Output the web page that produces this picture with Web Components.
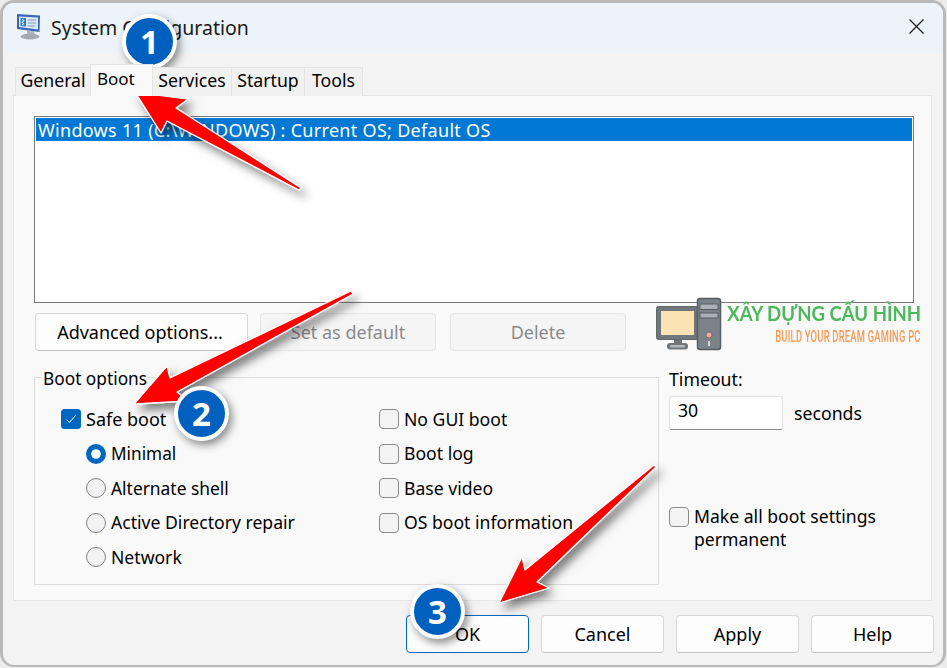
<!DOCTYPE html>
<html><head><meta charset="utf-8">
<style>
html,body{margin:0;padding:0;width:947px;height:668px;overflow:hidden;background:#ececec}
body{font-family:"Noto Sans","Open Sans",sans-serif;font-size:18px;color:#000}
</style></head><body>
<sys-window>
  <title-bar slot="title">System Configuration</title-bar>
  <tab-strip slot="tabs">
    <tab-item w="76">General</tab-item><tab-item w="63" active>Boot</tab-item><tab-item w="80">Services</tab-item><tab-item w="74">Startup</tab-item><tab-item w="59">Tools</tab-item>
  </tab-strip>
  <boot-panel slot="panel"></boot-panel>
  <win-button slot="foot" primary>OK</win-button>
  <win-button slot="foot">Cancel</win-button>
  <win-button slot="foot">Apply</win-button>
  <win-button slot="foot">Help</win-button>
</sys-window>
<brand-logo></brand-logo>
<arrow-layer></arrow-layer>
<step-badge n="1" style="left:122px;top:14px"></step-badge>
<step-badge n="2" style="left:174px;top:386px"></step-badge>
<step-badge n="3" style="left:410px;top:584px"></step-badge>
<script>
function def(name,html,init){
  customElements.define(name,class extends HTMLElement{
    constructor(){super();this.attachShadow({mode:'open'}).innerHTML=typeof html==='function'?html(this):html;}
    connectedCallback(){init&&init(this)}
  });
}
def('sys-window',`<style>
:host{display:flex;flex-direction:column;box-sizing:border-box;width:946px;height:667px;background:#f3f3f3;border:solid #b9b9b9;border-width:3px 3px 2px 3px;border-radius:14px;overflow:hidden;position:relative}
.foot{display:flex;justify-content:flex-end;gap:12px;padding:14px 9px 0 0}
.body{padding:0 10px;flex:0 0 auto}
</style>
<slot name="title"></slot>
<div class="body"><slot name="tabs"></slot><slot name="panel"></slot></div>
<div class="foot"><slot name="foot"></slot></div>`);
def('title-bar',`<style>
:host{display:flex;align-items:center;box-sizing:border-box;height:50px;background:#edf4f9;padding:0 0 2px 13px;font-size:19.5px;color:#1a1a1a;flex:none;position:relative}
svg.app{width:26px;height:26px;margin-right:9px;flex:none}
svg.x{position:absolute;right:19px;top:16px;width:15px;height:15px}
</style>
<svg class="app" viewBox="0 0 26 26"><path d="M1 0L24 1.5L23.5 18L1 15Z" fill="#3a66b8"/><path d="M3 2.5L22 3.5V15.5L3 13Z" fill="#dce8f6"/><path d="M4.5 4h5.5v8.5L4.5 12z" fill="#2b7fd0"/><path d="M6 5.5l2 1-2 2 2 1-2 1.5" fill="none" stroke="#fff" stroke-width="1"/><path d="M12 6h8M12 9h8M12 12h7" stroke="#7f97c0" stroke-width="1"/><path d="M11 17h7l1 4h-8z" fill="#aeb6be"/><ellipse cx="14" cy="22.5" rx="9.5" ry="3" fill="#a3abb3"/></svg>
<slot></slot>
<svg class="x" viewBox="0 0 15 15"><path d="M.5.5l14 14M14.5.5l-14 14" stroke="#1f1f1f" stroke-width="1.3" fill="none"/></svg>`);
def('tab-strip',`<style>:host{display:flex;align-items:flex-end;height:43px;padding-left:3px;position:relative;z-index:1;margin-bottom:-1px}</style><slot></slot>`);
def('tab-item',h=>`<style>
:host{display:block;box-sizing:border-box;width:${h.getAttribute('w')}px;height:29px;text-align:center;line-height:25px;font-size:17.7px;background:#f1f1f1;border:1px solid #e4e4e4;border-bottom:none;margin-left:-1px;color:#000}
:host([active]){height:32px;background:#f9f9f9;text-align:left;padding-left:6px;font-size:17px;line-height:27px;border-bottom:1px solid #f9f9f9;position:relative;z-index:1}
</style><slot></slot>`);
def('boot-panel',`<style>
:host{display:block;box-sizing:border-box;height:506px;background:#f9f9f9;border:1px solid #e4e4e4;padding:20px 18px 0 20px;width:919px}
.list{box-sizing:border-box;height:187px;width:880px;background:#fff;border:1px solid #7a7a7a;padding:1px}
.sel{background:#0078d4;color:#fff;height:23px;line-height:25px;padding-left:2px;white-space:nowrap;font-size:18px;letter-spacing:.3px}
.btns{display:flex;gap:12px;margin:10px 0 0 1px}
.lower{display:flex;margin-top:26px}
.group{box-sizing:border-box;width:625px;height:208px;border:1px solid #dcdcdc;position:relative;display:grid;grid-template-columns:318px 1fr;padding:24px 0 0 26px}
.legend{position:absolute;left:7px;top:-10px;background:#f9f9f9;padding:0 1px;font-size:17.3px;line-height:22px}
.col{display:flex;flex-direction:column;gap:0}
.sub{display:flex;flex-direction:column;padding-left:25px}
.right{margin-left:10px;display:flex;flex-direction:column;width:230px;position:relative;top:-9px;font-size:17.7px}
.tl{line-height:22px;height:28px}
.t{display:flex;align-items:center;gap:11px}
.inp{box-sizing:border-box;width:114px;height:34px;background:#fff;border:1px solid #e5e5e5;border-bottom-color:#8a8a8a;border-radius:3px;padding-left:8px;line-height:26px}
.perm{margin-top:75px}
</style>
<div class="list"><div class="sel">Windows 11 (C:\\WINDOWS) : Current OS; Default OS</div></div>
<div class="btns"><win-button w="213" style="padding-right:3px">Advanced options...</win-button><win-button w="176" disabled>Set as default</win-button><win-button w="176" style="margin-left:2px" disabled>Delete</win-button></div>
<div class="lower">
 <div class="group"><div class="legend">Boot options</div>
  <div class="col"><opt-row type="check" checked style="font-size:18px">Safe boot</opt-row>
   <div class="sub"><opt-row type="radio" checked style="font-size:17.2px">Minimal</opt-row><opt-row type="radio" style="font-size:17.4px">Alternate shell</opt-row><opt-row type="radio" style="margin-top:-.5px">Active Directory repair</opt-row><opt-row type="radio">Network</opt-row></div></div>
  <div class="col"><opt-row type="check">No GUI boot</opt-row><opt-row type="check">Boot log</opt-row><opt-row type="check">Base video</opt-row><opt-row type="check" style="margin-top:-.5px">OS boot information</opt-row></div>
 </div>
 <div class="right"><div class="tl">Timeout:</div><div class="t"><div class="inp">30</div><span>seconds</span></div>
  <div class="perm"><opt-row type="check" wrap>Make all boot settings<br>permanent</opt-row></div></div>
</div>`);
def('win-button',h=>`<style>
:host{display:flex;align-items:center;justify-content:center;box-sizing:border-box;width:${h.getAttribute('w')||123}px;height:38px;background:#fdfdfd;border:1px solid #d8d8d8;border-bottom-color:#c4c4c4;border-radius:4px;font-size:18px;flex:none}
:host([primary]){border-color:#0067c0}
:host([disabled]){background:#f5f5f5;border-color:#e5e5e5;color:#8a8a8a}
</style><slot></slot>`);
def('opt-row',h=>{
 const t=h.getAttribute('type'),c=h.hasAttribute('checked');
 let ic;
 if(t==='check') ic=c?`<svg viewBox="0 0 20 20"><rect width="20" height="20" rx="3.5" fill="#0067c0"/><path d="M5.5 10.5l3 3 6-7" fill="none" stroke="#fff" stroke-width="1"/></svg>`:`<svg viewBox="0 0 20 20"><rect x=".5" y=".5" width="19" height="19" rx="3.5" fill="#f3f3f3" stroke="#8a8a8a"/></svg>`;
 else ic=c?`<svg viewBox="0 0 20 20"><circle cx="10" cy="10" r="10" fill="#0067c0"/><circle cx="10" cy="10" r="4.8" fill="#fff"/></svg>`:`<svg viewBox="0 0 20 20"><circle cx="10" cy="10" r="9.5" fill="#f3f3f3" stroke="#808080"/></svg>`;
 return `<style>
 :host{display:flex;align-items:${h.hasAttribute('wrap')?'flex-start':'center'};gap:5px;min-height:34.6px;line-height:23px;font-size:17.6px;white-space:nowrap}
 svg{width:20px;height:20px;flex:none;${h.hasAttribute('wrap')?'margin-top:2px':''}}
 </style>${ic}<span><slot></slot></span>`;
});
def('brand-logo',`<style>
:host{position:absolute;left:655px;top:297px;width:268px;height:56px;display:block}
svg{position:absolute;left:0;top:0;width:67px;height:56px}
.a{position:absolute;right:2px;top:3px;font:700 20.5px/26px "Lato","Noto Sans",sans-serif;color:#4cb85c;white-space:nowrap;letter-spacing:0;transform:scaleX(.905);transform-origin:right center}
.b{position:absolute;right:2px;top:31px;font:500 16px/18px "Roboto",sans-serif;color:#f79a56;white-space:nowrap;letter-spacing:.4px;transform:scaleX(.585);transform-origin:right center}
</style>
<svg viewBox="0 0 67 56"><rect x="1.5" y="9.5" width="42" height="33" rx="2" fill="#6f777c" stroke="#5f676c"/><rect x="6" y="14" width="33" height="24" fill="#fde3b4"/><rect x="19" y="43" width="8" height="5" fill="#6f777c"/><rect x="12" y="46" width="21" height="6.5" rx="3" fill="#6f777c"/><rect x="15" y="48" width="15" height="2.5" rx="1" fill="#b2b8bc"/>
<rect x="42.5" y="1.5" width="23" height="51" rx="2.5" fill="#7b8388" stroke="#565e63" stroke-width="1.5"/><rect x="45" y="7" width="18" height="5.5" fill="#aab1b5" stroke="#565e63"/><rect x="45" y="16" width="18" height="5" fill="#aab1b5" stroke="#565e63"/><circle cx="54" cy="38" r="3" fill="#f4a9a0" stroke="#565e63" stroke-width=".7"/><rect x="53" y="44" width="2" height="5" fill="#d5d9db"/></svg>
<div class="a">XÂY DỰNG CẤU HÌNH</div><div class="b">BUILD YOUR DREAM GAMING PC</div>`);
def('arrow-layer',`<style>
:host{position:absolute;left:0;top:0;width:947px;height:668px;display:block;pointer-events:none}
svg{width:947px;height:668px;display:block}
</style>
<svg viewBox="0 0 947 668"><defs><filter id="s" x="-20%" y="-20%" width="150%" height="150%"><feDropShadow dx="5" dy="6" stdDeviation="5" flood-color="#000" flood-opacity=".5"/></filter></defs>
<g fill="#f00" stroke="#fff" stroke-width="1.3" stroke-linejoin="round" filter="url(#s)">
<path d="M135 92L188 99L176 108L301 188L299 190L167 121L161 133Z"/>
<path d="M134 404L167 366L170 378L351 291L353 294L177 392L188 401Z"/>
<path d="M499 603L522 557L525 570L654 465L656 467L537 582L549 588Z"/>
</g></svg>`);
def('step-badge',h=>`<style>
:host{position:absolute;display:flex;align-items:center;justify-content:center;box-sizing:border-box;width:55px;height:55px;border-radius:50%;background:#0060c0;border:4px solid #fff;box-shadow:3px 4px 8px rgba(0,0,0,.45);color:#fff;font:700 33px/1 "Noto Sans",sans-serif}
</style>${h.getAttribute('n')}`);
</script>
</body></html>
